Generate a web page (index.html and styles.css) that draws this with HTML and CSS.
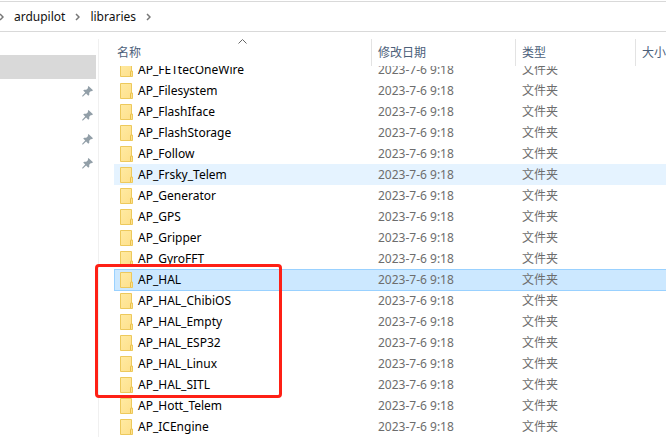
FILE: index.html
```html
<!DOCTYPE html>
<html lang="zh-CN">
<head>
<meta charset="utf-8">
<title>libraries</title>
<link rel="stylesheet" href="styles.css">
</head>
<body>
<svg class="defs" aria-hidden="true">
  <defs>
    <linearGradient id="paper" x1="0" y1="0" x2="1" y2="1">
      <stop offset="0" stop-color="#ffeaa2"/><stop offset="1" stop-color="#fee08b"/>
    </linearGradient>
    <symbol id="folder" viewBox="0 0 13 16">
      <path d="M.5.5h11v9.500h1v5.500h-12z" fill="url(#paper)" stroke="#edc95c"/>
      <path d="M10.500 15v-4.500q0-.5.5-.5h1" fill="none" stroke="#e9c04a"/>
    </symbol>
    <symbol id="pin" viewBox="0 0 11 11">
      <path d="M6.500 0 11 4.300 9.800 5.200 9 5 7.200 6.800 7.300 8.800 6.300 9.700 4.100 7.500 1 10.500H.2V9.700L3.200 6.600 1.200 4.600 2.200 3.700 4.300 3.800 6.100 2 5.800 1z" fill="#929fa8"/>
    </symbol>
    <symbol id="chevron" viewBox="0 0 5 8">
      <path d="M1 1l3 3-3 3" fill="none" stroke="#777" stroke-width="1.500"/>
    </symbol>
  </defs>
</svg>
<nav class="address" aria-label="路径">
  <svg class="chevron"><use href="#chevron"/></svg>
  <a href="#">ardupilot</a>
  <svg class="chevron"><use href="#chevron"/></svg>
  <a href="#">libraries</a>
  <svg class="chevron"><use href="#chevron"/></svg>
</nav>
<div class="explorer">
  <aside class="sidebar">
    <ul class="quick">
      <li class="current"></li>
      <li><svg class="pin"><use href="#pin"/></svg></li>
      <li><svg class="pin"><use href="#pin"/></svg></li>
      <li><svg class="pin"><use href="#pin"/></svg></li>
      <li><svg class="pin"><use href="#pin"/></svg></li>
    </ul>
  </aside>
  <main class="files">
    <table>
      <colgroup><col class="col-name"><col class="col-date"><col class="col-type"><col></colgroup>
      <thead>
        <tr>
          <th class="sorted">名称<svg class="sort" viewBox="0 0 9 5"><path d="M.5 4.500l4-4 4 4" fill="none" stroke="#666"/></svg></th>
          <th>修改日期</th><th>类型</th><th>大小</th>
        </tr>
      </thead>
      <tbody>
        <tr class="partial"><td><div class="name"><svg class="folder"><use href="#folder"/></svg>AP_FETtecOneWire</div></td><td><div>2023-7-6 9:18</div></td><td><div>文件夹</div></td><td></td></tr>
        <tr><td><div class="name"><svg class="folder"><use href="#folder"/></svg>AP_Filesystem</div></td><td>2023-7-6 9:18</td><td>文件夹</td><td></td></tr>
        <tr><td><div class="name"><svg class="folder"><use href="#folder"/></svg>AP_FlashIface</div></td><td>2023-7-6 9:18</td><td>文件夹</td><td></td></tr>
        <tr><td><div class="name"><svg class="folder"><use href="#folder"/></svg>AP_FlashStorage</div></td><td>2023-7-6 9:18</td><td>文件夹</td><td></td></tr>
        <tr><td><div class="name"><svg class="folder"><use href="#folder"/></svg>AP_Follow</div></td><td>2023-7-6 9:18</td><td>文件夹</td><td></td></tr>
        <tr class="hovered"><td><div class="name"><svg class="folder"><use href="#folder"/></svg>AP_Frsky_Telem</div></td><td>2023-7-6 9:18</td><td>文件夹</td><td></td></tr>
        <tr><td><div class="name"><svg class="folder"><use href="#folder"/></svg>AP_Generator</div></td><td>2023-7-6 9:18</td><td>文件夹</td><td></td></tr>
        <tr><td><div class="name"><svg class="folder"><use href="#folder"/></svg>AP_GPS</div></td><td>2023-7-6 9:18</td><td>文件夹</td><td></td></tr>
        <tr><td><div class="name"><svg class="folder"><use href="#folder"/></svg>AP_Gripper</div></td><td>2023-7-6 9:18</td><td>文件夹</td><td></td></tr>
        <tr><td><div class="name"><svg class="folder"><use href="#folder"/></svg>AP_GyroFFT</div></td><td>2023-7-6 9:18</td><td>文件夹</td><td></td></tr>
        <tr class="selected"><td><div class="name"><svg class="folder"><use href="#folder"/></svg>AP_HAL</div><span class="marker"></span></td><td>2023-7-6 9:18</td><td>文件夹</td><td></td></tr>
        <tr><td><div class="name"><svg class="folder"><use href="#folder"/></svg>AP_HAL_ChibiOS</div></td><td>2023-7-6 9:18</td><td>文件夹</td><td></td></tr>
        <tr><td><div class="name"><svg class="folder"><use href="#folder"/></svg>AP_HAL_Empty</div></td><td>2023-7-6 9:18</td><td>文件夹</td><td></td></tr>
        <tr><td><div class="name"><svg class="folder"><use href="#folder"/></svg>AP_HAL_ESP32</div></td><td>2023-7-6 9:18</td><td>文件夹</td><td></td></tr>
        <tr><td><div class="name"><svg class="folder"><use href="#folder"/></svg>AP_HAL_Linux</div></td><td>2023-7-6 9:18</td><td>文件夹</td><td></td></tr>
        <tr><td><div class="name"><svg class="folder"><use href="#folder"/></svg>AP_HAL_SITL</div></td><td>2023-7-6 9:18</td><td>文件夹</td><td></td></tr>
        <tr><td><div class="name"><svg class="folder"><use href="#folder"/></svg>AP_Hott_Telem</div></td><td>2023-7-6 9:18</td><td>文件夹</td><td></td></tr>
        <tr><td><div class="name"><svg class="folder"><use href="#folder"/></svg>AP_ICEngine</div></td><td>2023-7-6 9:18</td><td>文件夹</td><td></td></tr>
      </tbody>
    </table>
  </main>
</div>
</body>
</html>
```
FILE: styles.css
```css
* {
  box-sizing: border-box;
}

body {
  margin: 0;
  padding-top: 1px;
  background: #fff;
  color: #000;
  font: 12px/21px "Noto Sans", "Noto Sans CJK SC", sans-serif;
  overflow: hidden;
}

.defs {
  position: absolute;
  width: 0;
  height: 0;
}

.address {
  display: flex;
  align-items: center;
  gap: 10px;
  height: 31px;
  border: solid #d9d9d9;
  border-width: 1px 0;
}

.address a {
  color: #111;
  text-decoration: none;
}

.chevron {
  width: 5px;
  height: 8px;
}

.address .chevron:first-child {
  margin-left: -1px;
}

.explorer {
  display: flex;
  padding-top: 7px;
}

.sidebar {
  flex: none;
  width: 99px;
  padding-top: 16px;
  border-right: 1px solid #f0f0f0;
}

.quick {
  margin: 0;
  padding: 0;
  list-style: none;
}

.quick li {
  display: flex;
  align-items: center;
  justify-content: flex-end;
  height: 24px;
  margin-right: 2px;
  padding-right: 3px;
}

.quick .current {
  background: #d9d9d9;
}

.pin {
  width: 11px;
  height: 11px;
}

.files {
  flex: 1;
  min-width: 0;
  padding-left: 15px;
}

table {
  width: 100%;
  table-layout: fixed;
  border-collapse: separate;
  border-spacing: 0;
}

.col-name {
  width: 258px;
}

.col-date {
  width: 144px;
}

.col-type {
  width: 120px;
}

th {
  position: relative;
  height: 27px;
  padding: 0 0 0 6px;
  border-right: 1px solid #e3e3e3;
  color: #4c607a;
  font-weight: 400;
  text-align: left;
  white-space: nowrap;
}

th:last-child {
  border-right: 0;
}

th.sorted {
  padding-left: 3px;
}

.sort {
  position: absolute;
  top: 0;
  left: calc(50% - 5px);
  width: 9px;
  height: 5px;
}

td {
  height: 21px;
  padding: 0 0 0 6px;
  color: #6d6d6d;
  white-space: nowrap;
}

td:first-child {
  color: #000;
}

.name {
  display: flex;
  align-items: center;
  gap: 5px;
  height: 21px;
}

.folder {
  width: 13px;
  height: 16px;
}

.partial td {
  height: 14px;
}

.partial div {
  display: flex;
  align-items: flex-end;
  height: 14px;
  overflow: hidden;
}

.partial .folder {
  flex: none;
  margin-bottom: 3px;
}

.hovered td {
  background: #e5f3ff;
}

.selected td {
  background: #cce8ff;
  box-shadow: inset 0 1px #99d1ff, 0 1px #99d1ff;
}

.selected td:first-child {
  position: relative;
  box-shadow: inset 1px 1px #99d1ff, 0 1px #99d1ff;
}

.marker {
  position: absolute;
  top: -5px;
  left: -19px;
  width: 187px;
  height: 134px;
  border: 3px solid #fe2015;
  border-radius: 4px;
}
```
